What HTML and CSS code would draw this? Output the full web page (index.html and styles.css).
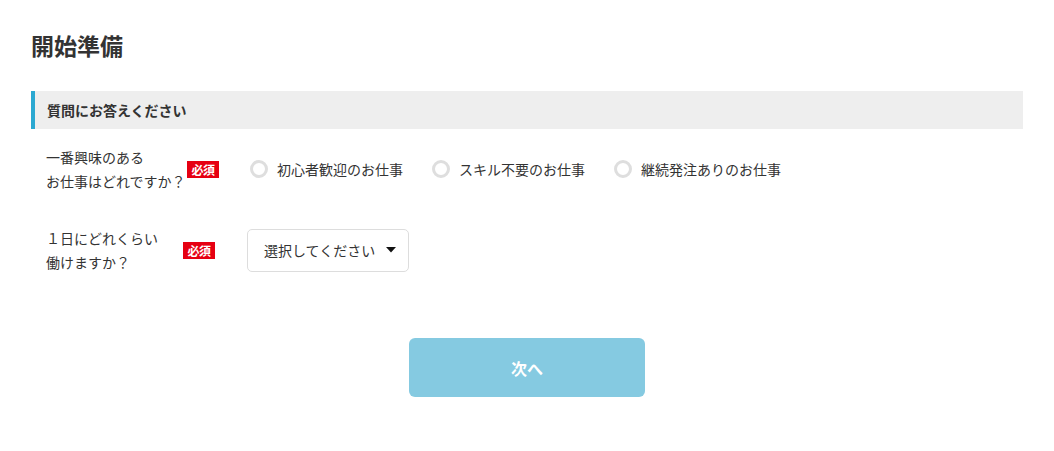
FILE: index.html
```html
<!DOCTYPE html>
<html lang="ja">
<head>
<meta charset="utf-8">
<title>開始準備</title>
<link rel="stylesheet" href="styles.css">
</head>
<body>
<main class="page">
  <h1 class="title">開始準備</h1>
  <section class="section">
    <h2 class="section-head">質問にお答えください</h2>
    <div class="q-row q-row--first">
      <div class="q-label">
        <span class="q-text q-text--wide">一番興味のある<br>お仕事はどれですか？</span>
        <span class="badge">必須</span>
      </div>
      <div class="q-control radios">
        <label class="radio"><span class="radio-dot"></span><span>初心者歓迎のお仕事</span></label>
        <label class="radio"><span class="radio-dot"></span><span>スキル不要のお仕事</span></label>
        <label class="radio"><span class="radio-dot"></span><span>継続発注ありのお仕事</span></label>
      </div>
    </div>
    <div class="q-row q-row--second">
      <div class="q-label">
        <span class="q-text">１日にどれくらい<br>働けますか？</span>
        <span class="badge">必須</span>
      </div>
      <div class="q-control">
        <div class="select">
          <span>選択してください</span>
          <svg class="select-arrow" width="10" height="6" viewBox="0 0 10 6"><path d="M0 0H10L5 5.5Z" fill="#111"/></svg>
        </div>
      </div>
    </div>
  </section>
  <div class="actions">
    <button class="next-btn" type="button">次へ</button>
  </div>
</main>
</body>
</html>
```

FILE: styles.css
```css
* { box-sizing: border-box; }
html, body {
  margin: 0;
  padding: 0;
  background: #fff;
}
body {
  font-family: "Noto Sans CJK JP", "Noto Sans", sans-serif;
  color: #333;
  font-size: 14px;
}
.page {
  padding: 29px 31px 0 31px;
}
.title {
  margin: 0;
  font-size: 23px;
  line-height: 32px;
  font-weight: 700;
  color: #333;
}
.section {
  margin-top: 30px;
}
.section-head {
  margin: 0;
  height: 38px;
  display: flex;
  align-items: center;
  padding-left: 12px;
  background: #eeeeee;
  border-left: 4px solid #2ba8d1;
  font-size: 14px;
  font-weight: 700;
  color: #333;
}
.q-row {
  display: flex;
  align-items: center;
  padding-left: 15px;
}
.q-row--first {
  margin-top: 16px;
}
.q-row--second {
  margin-top: 33px;
}
.q-label {
  width: 201px;
  display: flex;
  align-items: center;
  flex-shrink: 0;
}
.q-text {
  width: 137px;
  font-size: 14px;
  line-height: 24px;
  color: #333;
}
.q-text--wide {
  width: 141px;
}
.badge {
  display: inline-block;
  width: 32px;
  height: 17px;
  line-height: 17px;
  text-align: center;
  background: #e60012;
  color: #fff;
  font-size: 12px;
  font-weight: 700;
  letter-spacing: -0.5px;
}
.radios {
  display: flex;
  align-items: center;
  gap: 29px;
  padding-left: 3px;
}
.radio {
  display: flex;
  align-items: center;
  gap: 9px;
  font-size: 14px;
  line-height: 24px;
  color: #333;
}
.radio-dot {
  width: 18px;
  height: 18px;
  border-radius: 50%;
  border: 3px solid #dedede;
  background: #fff;
}
.select {
  width: 162px;
  height: 43px;
  border: 1px solid #dddddd;
  border-radius: 5px;
  display: flex;
  align-items: center;
  justify-content: space-between;
  padding: 0 12px 0 16px;
  font-size: 14px;
  color: #333;
  background: #fff;
}
.select-arrow {
  display: block;
}
.actions {
  display: flex;
  justify-content: center;
  margin-top: 64px;
  margin-left: -31px;
  margin-right: -31px;
}
.next-btn {
  width: 236px;
  height: 59px;
  border: 0;
  border-radius: 6px;
  background: #85cae1;
  color: #fff;
  font-family: "Noto Sans CJK JP", "Noto Sans", sans-serif;
  font-size: 16px;
  font-weight: 700;
}
```
